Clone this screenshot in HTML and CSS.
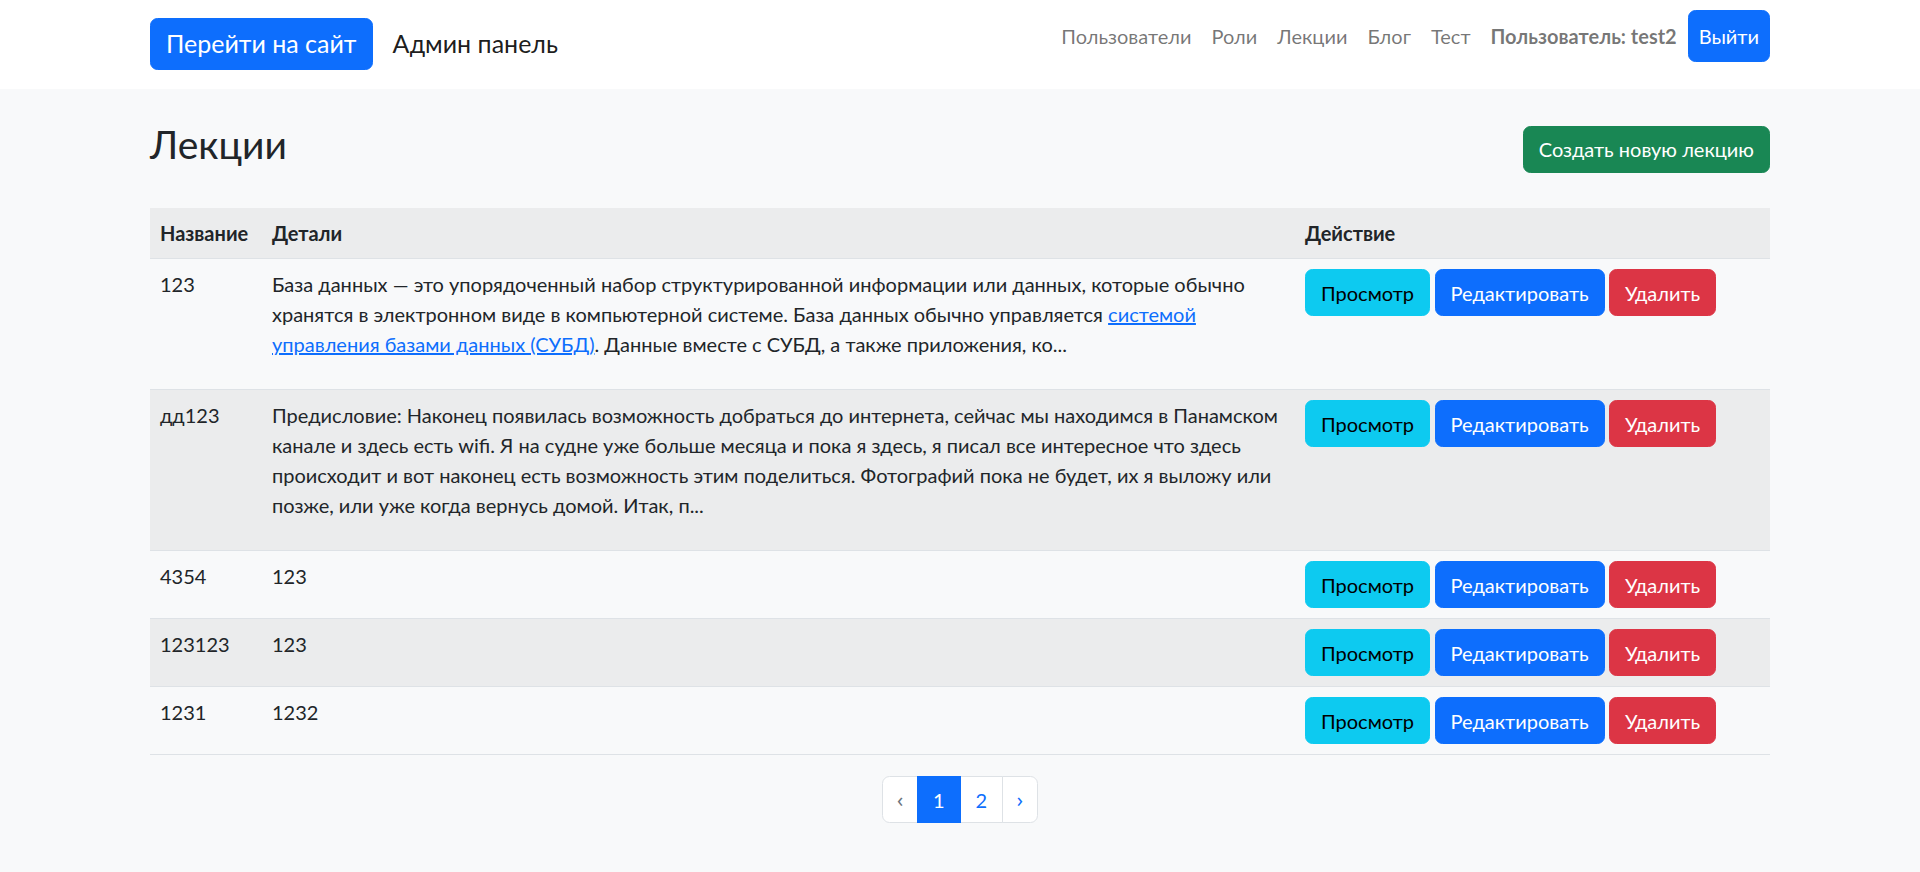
FILE: index.html
```
<!DOCTYPE html>
<html lang="ru">
<head>
<meta charset="utf-8">
<title>Лекции</title>
<link rel="stylesheet" href="styles.css">
</head>
<body>
<nav class="navbar">
  <div class="container navbar-inner">
    <div class="navbar-left">
      <a class="btn btn-primary btn-brand" href="#">Перейти на сайт</a>
      <span class="brand-text">Админ панель</span>
    </div>
    <div class="navbar-right">
      <a class="nav-link" href="#">Пользователи</a>
      <a class="nav-link" href="#">Роли</a>
      <a class="nav-link" href="#">Лекции</a>
      <a class="nav-link" href="#">Блог</a>
      <a class="nav-link" href="#">Тест</a>
      <span class="navbar-text">Пользователь: test2</span>
      <a class="btn btn-primary btn-logout" href="#">Выйти</a>
    </div>
  </div>
</nav>

<main class="container main">
  <div class="page-head">
    <h2 class="page-title">Лекции</h2>
    <a class="btn btn-success" href="#">Создать новую лекцию</a>
  </div>

  <table class="table">
    <colgroup>
      <col class="col-name">
      <col class="col-details">
      <col class="col-actions">
    </colgroup>
    <tbody>
      <tr class="head-row">
        <th>Название</th>
        <th>Детали</th>
        <th>Действие</th>
      </tr>
      <tr>
        <td>123</td>
        <td><p>База данных — это упорядоченный набор структурированной информации или данных, которые обычно хранятся в электронном виде в компьютерной системе. База данных обычно управляется <a class="link" href="#">системой управления базами данных (СУБД)</a>. Данные вместе с СУБД, а также приложения, ко...</p></td>
        <td><div class="actions"><a class="btn btn-info" href="#">Просмотр</a><a class="btn btn-primary" href="#">Редактировать</a><a class="btn btn-danger" href="#">Удалить</a></div></td>
      </tr>
      <tr>
        <td>дд123</td>
        <td><p>Предисловие: Наконец появилась возможность добраться до интернета, сейчас мы находимся в Панамском канале и здесь есть wifi. Я на судне уже больше месяца и пока я здесь, я писал все интересное что здесь происходит и вот наконец есть возможность этим поделиться. Фотографий пока не будет, их я выложу или позже, или уже когда вернусь домой. Итак, п...</p></td>
        <td><div class="actions"><a class="btn btn-info" href="#">Просмотр</a><a class="btn btn-primary" href="#">Редактировать</a><a class="btn btn-danger" href="#">Удалить</a></div></td>
      </tr>
      <tr>
        <td>4354</td>
        <td>123</td>
        <td><div class="actions"><a class="btn btn-info" href="#">Просмотр</a><a class="btn btn-primary" href="#">Редактировать</a><a class="btn btn-danger" href="#">Удалить</a></div></td>
      </tr>
      <tr>
        <td>123123</td>
        <td>123</td>
        <td><div class="actions"><a class="btn btn-info" href="#">Просмотр</a><a class="btn btn-primary" href="#">Редактировать</a><a class="btn btn-danger" href="#">Удалить</a></div></td>
      </tr>
      <tr>
        <td>1231</td>
        <td>1232</td>
        <td><div class="actions"><a class="btn btn-info" href="#">Просмотр</a><a class="btn btn-primary" href="#">Редактировать</a><a class="btn btn-danger" href="#">Удалить</a></div></td>
      </tr>
    </tbody>
  </table>

  <nav class="pagination-wrap">
    <ul class="pagination">
      <li class="page-item disabled"><span class="page-link arrow">‹</span></li>
      <li class="page-item active"><span class="page-link">1</span></li>
      <li class="page-item"><a class="page-link" href="#">2</a></li>
      <li class="page-item"><a class="page-link arrow" href="#">›</a></li>
    </ul>
  </nav>
</main>
</body>
</html>
```
FILE: styles.css
```
* {
  box-sizing: border-box;
}

html, body {
  margin: 0;
  padding: 0;
}

body {
  font-family: "Lato", "Noto Sans", sans-serif;
  font-size: 20px;
  line-height: 30px;
  color: #212529;
  background: #f8f9fa;
  min-height: 872px;
}

.container {
  width: 1620px;
  margin: 0 auto;
}

/* ---------- buttons ---------- */
.btn {
  display: inline-block;
  font-size: 20px;
  line-height: 30px;
  padding: 7.5px 15px;
  border: 1.25px solid transparent;
  border-radius: 7.5px;
  text-decoration: none;
  white-space: nowrap;
  color: #fff;
}

.btn-primary {
  background: #0d6efd;
  border-color: #0d6efd;
}

.btn-success {
  background: #198754;
  border-color: #198754;
}

.btn-info {
  background: #0dcaf0;
  border-color: #0dcaf0;
  color: #000;
}

.btn-danger {
  background: #dc3545;
  border-color: #dc3545;
}

/* ---------- navbar ---------- */
.navbar {
  background: #fff;
  height: 89px;
}

.navbar-inner {
  display: flex;
  justify-content: space-between;
  align-items: flex-start;
}

.navbar-left {
  display: flex;
  align-items: center;
  padding-top: 18px;
}

.btn-brand {
  font-size: 25px;
  line-height: 37.5px;
  padding: 6.25px 15px;
  border-width: 1.25px;
}

.brand-text {
  margin-left: 20px;
  font-size: 25px;
  line-height: 37.5px;
  color: rgba(0, 0, 0, 0.9);
}

.navbar-right {
  display: flex;
  align-items: center;
  padding-top: 10px;
}

.nav-link {
  display: block;
  padding: 10px 10px;
  color: rgba(0, 0, 0, 0.55);
  text-decoration: none;
}

.navbar-text {
  padding: 10px 11px 10px 10px;
  font-weight: 700;
  color: rgba(0, 0, 0, 0.55);
}

.btn-logout {
  padding: 10px 10px;
}

/* ---------- main ---------- */
.main {
  padding-top: 31px;
  padding-bottom: 30px;
}

.page-head {
  display: flex;
  justify-content: space-between;
  align-items: center;
  margin-bottom: 30px;
}

.page-title {
  margin: 0 0 10px;
  font-size: 39px;
  line-height: 48px;
  font-weight: 400;
  color: #212529;
}

/* ---------- table ---------- */
.table {
  width: 1620px;
  border-collapse: collapse;
  table-layout: fixed;
  margin-bottom: 21px;
}

.col-name {
  width: 112px;
}

.col-details {
  width: 1033px;
}

.col-actions {
  width: 475px;
}

.table th,
.table td {
  padding: 10px;
  text-align: left;
  vertical-align: top;
  border-bottom: 1px solid #dee2e6;
}

.table th {
  font-weight: 700;
}

.table tbody tr:nth-of-type(odd) {
  background: #ebeced;
}

.table p {
  margin: 0 0 20px;
}

.link {
  color: #0d6efd;
  text-decoration: underline;
}

.actions {
  display: flex;
  gap: 4.5px;
}

/* ---------- pagination ---------- */
.pagination-wrap {
  display: flex;
  justify-content: center;
}

.pagination {
  display: flex;
  list-style: none;
  margin: 0;
  padding: 0;
}

.page-link {
  display: block;
  padding: 7.5px 15px;
  line-height: 30px;
  font-size: 20px;
  color: #0d6efd;
  background: #fff;
  border: 1.25px solid #dee2e6;
  text-decoration: none;
  margin-left: -1.25px;
}

.page-link.arrow {
  font-family: "Noto Sans", sans-serif;
  padding: 7.5px 14px;
}

.page-item:first-child .page-link {
  margin-left: 0;
  border-radius: 7.5px 0 0 7.5px;
}

.page-item:last-child .page-link {
  border-radius: 0 7.5px 7.5px 0;
}

.page-item.disabled .page-link {
  color: #6c757d;
}

.page-item.active .page-link {
  background: #0d6efd;
  border-color: #0d6efd;
  color: #fff;
  position: relative;
  z-index: 1;
}
```
